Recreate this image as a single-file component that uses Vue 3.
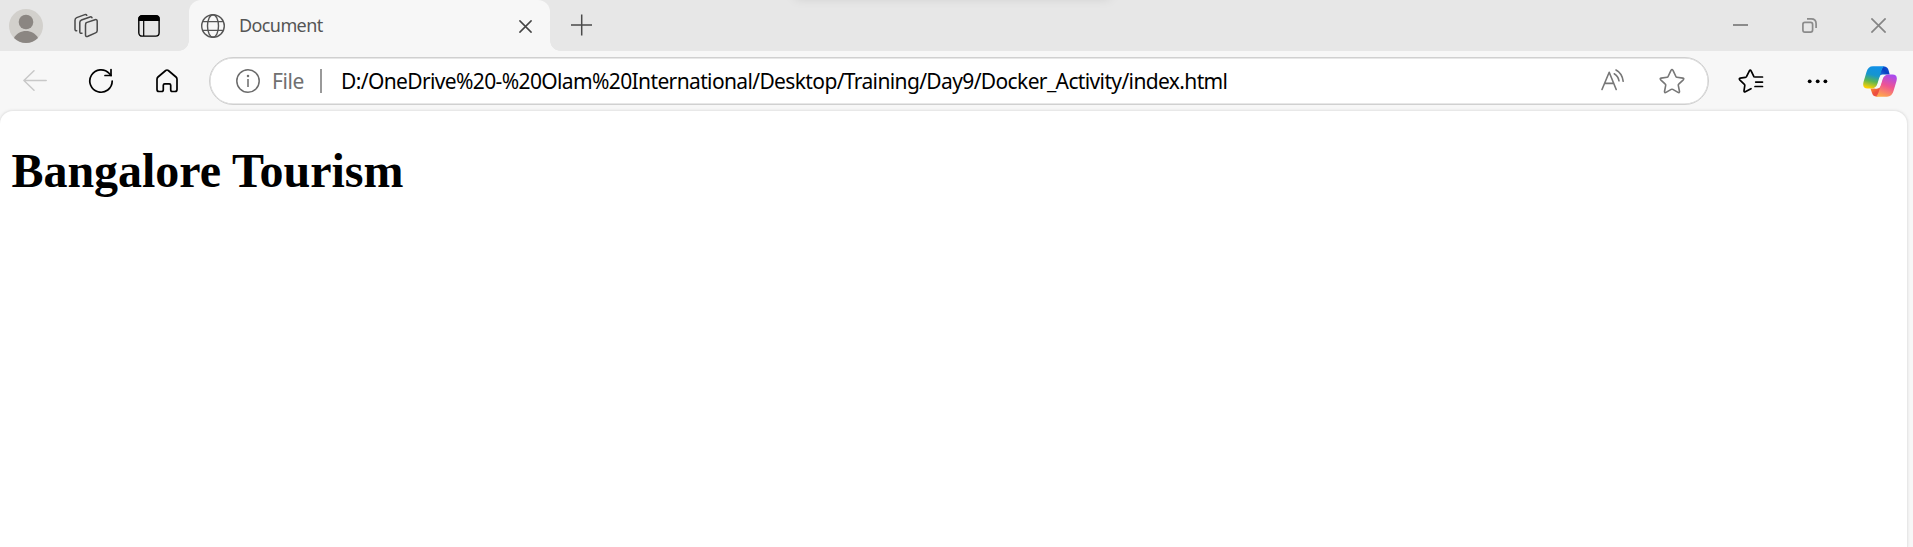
<script setup>
const tabTitle = 'Document'
const scheme = 'File'
const address = 'D:/OneDrive%20-%20Olam%20International/Desktop/Training/Day9/Docker_Activity/index.html'
const heading = 'Bangalore Tourism'
</script>

<template>
  <div class="browser">
    <header class="strip">
      <div class="overhang"></div>
      <svg class="avatar" width="34" height="34" viewBox="0 0 34 34">
        <circle cx="17" cy="17" r="17" fill="#d2d0cc" />
        <circle cx="17" cy="13" r="7.3" fill="#8b8682" />
        <path d="M5 29C7.500 24.300 12 22 17 22s9.500 2.300 12 7A17 17 0 0 1 5 29Z" fill="#8b8682" />
      </svg>
      <svg class="workspaces" width="26" height="26" viewBox="0 0 26 26" fill="none" stroke="#4a4a4a" stroke-width="1.5" stroke-linejoin="round" stroke-linecap="round">
        <path d="M13.300 9.600 22 6.700q2.200-.6 2.200 1.600v9.200q0 1.800-1.600 2.400l-7.700 3.400q-2.400.8-2.400-1.400v-9.500q0-2 .8-2.800Z" />
        <path d="M19 4.800q-.4-1.300-2-.8L8.500 7Q6.800 7.600 6.800 9.600V19q0 1.600 2.200 1.200" />
        <path d="M13.800 2.300q-.6-1.200-2-.7L3.700 4.600Q2 5.300 2 7.200v9q0 1.600 1.700 1.500" />
      </svg>
      <svg class="tabmenu" width="22" height="22" viewBox="0 0 22 22">
        <rect x=".8" y=".8" width="20.300" height="20.300" rx="3.300" fill="none" stroke="#000" stroke-width="1.400" />
        <path d="M.3 6V4Q.3.300 4 .3h14q3.700 0 3.700 3.700v2Z" />
        <path d="M5.700 5v16" stroke="#000" stroke-width="1.200" />
      </svg>
      <div class="tab">
        <svg class="globe" width="24" height="24" viewBox="0 0 24 24" fill="none" stroke="#555" stroke-width="1.400">
          <circle cx="12" cy="12" r="11.300" />
          <ellipse cx="12" cy="12" rx="5.500" ry="11.300" />
          <path d="M1.600 7.600h20.800M1.600 16.400h20.800" />
        </svg>
        <span class="title">{{ tabTitle }}</span>
        <svg class="tabclose" width="13" height="13" viewBox="0 0 13 13" stroke="#444" stroke-width="1.500" stroke-linecap="round">
          <path d="m.9.9 11.200 11.200M12.100.9.900 12.100" />
        </svg>
      </div>
      <svg class="plus" width="22" height="22" viewBox="0 0 22 22" stroke="#4a4a4a" stroke-width="1.500">
        <path d="M0 11h21M10.700.500v21" />
      </svg>
      <div class="controls">
        <svg width="15" height="15" viewBox="0 0 15 15"><path d="M0 7h15" stroke="#8b8b8b" stroke-width="2" /></svg>
        <svg width="15" height="15" viewBox="0 0 15 15" fill="none" stroke="#8b8b8b" stroke-width="1.700">
          <rect x=".9" y="4.400" width="9.700" height="9.700" rx="2" />
          <path d="M5 .9h4.200q4.900 0 4.900 4.900V10" />
        </svg>
        <svg width="15" height="15" viewBox="0 0 15 15" stroke="#858585" stroke-width="1.700"><path d="m.4.4 14.200 14.200M14.600.4.400 14.600" /></svg>
      </div>
    </header>

    <nav class="toolbar">
      <svg class="back" width="24" height="22" viewBox="0 0 24 22" fill="none" stroke="#c8c8c8" stroke-width="1.500" stroke-linecap="round" stroke-linejoin="round">
        <path d="M23.200 10.500H.9M11 .800.900 10.500 11 20.300" />
      </svg>
      <svg class="reload" width="26" height="26" viewBox="0 0 26 26" fill="none" stroke="#000" stroke-width="1.700" stroke-linecap="round" stroke-linejoin="round">
        <path d="M24.200 13A11.200 11.200 0 1 1 21.300 5.500L23 7.500" />
        <path d="M23 1.500v6h-6" />
      </svg>
      <svg class="home" width="22" height="24" viewBox="0 0 22 24" fill="none" stroke="#000" stroke-width="1.700" stroke-linejoin="round">
        <path d="M1 10.200q0-1.300 1-2.200l7.700-6.500q1.300-1 2.600 0L20 8q1 .9 1 2.200v10.300q0 2-2 2h-2.500q-1.800 0-1.800-1.800v-4.500q0-1.400-1.400-1.400H8.700q-1.400 0-1.400 1.400v4.500q0 1.800-1.800 1.800H3q-2 0-2-2Z" />
      </svg>
      <div class="address">
        <svg class="info" width="24" height="24" viewBox="0 0 24 24" fill="none" stroke="#6b6b6b" stroke-width="1.500">
          <circle cx="12" cy="12" r="11.200" />
          <path d="M12 10v8" />
          <circle cx="12" cy="7" r=".5" />
        </svg>
        <span class="scheme">{{ scheme }}</span>
        <i class="divider"></i>
        <span class="url">{{ address }}</span>
        <svg class="read" width="24" height="24" viewBox="0 0 24 24" fill="none" stroke="#777" stroke-width="1.600" stroke-linecap="round" stroke-linejoin="round">
          <path d="M1 20.500 8.200 3.300l7 17.200M3.600 14.400h9.200" />
          <path d="M13.200 4.800q4 2.300 4.800 7M15 1q6.200 3.300 7.200 11.300" />
        </svg>
        <svg class="star" width="26" height="26" viewBox="0 0 26 26" fill="none" stroke="#777" stroke-width="1.600" stroke-linejoin="round">
          <path d="M12 2.300q1-1.600 2 0l2.900 6.200q.3.700 1 .8l6 .8q1.600.4.400 1.700l-4.600 4.400q-.6.500-.4 1.200l1.200 6.100q0 1.600-1.500.9l-5.200-3q-.8-.4-1.600 0l-5.200 3q-1.500.7-1.500-.9l1.200-6.100q.2-.7-.4-1.200l-4.600-4.400q-1.200-1.300.4-1.700l6-.8q.7-.1 1-.8Z" />
        </svg>
      </div>
      <svg class="favorites" width="26" height="26" viewBox="0 0 26 26" fill="none" stroke="#000" stroke-width="1.700" stroke-linecap="round" stroke-linejoin="round">
        <path d="M17 9h7.500M17.700 14.100h6.800M17 18.500h7.500" />
        <path d="m15.900 8.700-2.800-5.900q-.8-1.500-1.700 0L8.500 8.600q-.4.700-1.100.8l-5.200.8q-1.500.3-.5 1.600l4.700 4.500q.5.500.4 1.200l-.8 5.300q-.1 1.500 1.300.9l5.700-3" />
      </svg>
      <svg class="dots" width="22" height="6" viewBox="0 0 22 6"><circle cx="2.700" cy="3.300" r="1.900" /><circle cx="10.700" cy="3.300" r="1.900" /><circle cx="18.400" cy="3.300" r="1.900" /></svg>
      <svg class="copilot" width="34" height="31" viewBox="0 0 34 31">
        <defs>
          <linearGradient id="cool" x1=".6" y1="0" x2=".35" y2="1"><stop offset="0" stop-color="#1090e8" /><stop offset=".4" stop-color="#1695cf" /><stop offset=".68" stop-color="#59b553" /><stop offset="1" stop-color="#ffd000" /></linearGradient>
          <linearGradient id="warm" x1=".7" y1="0" x2=".35" y2="1"><stop offset="0" stop-color="#a84af0" /><stop offset=".5" stop-color="#ef5492" /><stop offset="1" stop-color="#ffa64c" /></linearGradient>
          <linearGradient id="navy" x1="0" y1="1" x2="1" y2="0"><stop offset="0" stop-color="#258be5" /><stop offset=".6" stop-color="#0a40c2" /><stop offset="1" stop-color="#1458d9" /></linearGradient>
          <linearGradient id="ember" x1="0" y1="0" x2=".8" y2="1"><stop offset="0" stop-color="#ffa52c" /><stop offset=".6" stop-color="#ee503e" /><stop offset="1" stop-color="#e84b4e" /></linearGradient>
        </defs>
        <path d="M15 10 20 .500h1q3.500 0 4.500 3.500l1.200 4.500h-7q-2.700 0-3.700 3Z" fill="url(#navy)" />
        <path d="M19 20.500 14.500 30.500h-1q-3.500 0-4.500-3.500l-1.500-4.500h6.700q2.700 0 3.800-3Z" fill="url(#ember)" />
        <path d="M10 .300h12q-2.500.7-3.700 4.700l-3.800 12.500q-1.500 5-6.500 5H4.500q-5.500 0-4-6.500L3.500 6Q5 .300 10 .300Z" fill="url(#cool)" />
        <path d="M24 30.700H12q2.500-.7 3.700-4.700l3.800-12.500q1.500-5 6.500-5h3.500q5.500 0 4 6.500L30.500 25q-1.500 5.700-6.500 5.700Z" fill="url(#warm)" />
        <path d="M20 9h2.200q-2.200 1.300-3 4.100l-1.600 5.400q-1 3.600-4 3.900H11.500q2.500-.9 3.500-4.300l1.400-4.900q.9-3.400 3.600-4.200Z" fill="#f8f8f8" />
      </svg>
    </nav>

    <main class="page">
      <h1>{{ heading }}</h1>
    </main>
  </div>
</template>

<style>
html,
body {
  overflow: hidden;
}
</style>

<style scoped>
.browser {
  display: flex;
  flex-direction: column;
  width: 1913px;
  height: 547px;
  overflow: hidden;
  background: #f7f7f7;
  font-family: "Noto Sans", "Open Sans", sans-serif;
}
svg {
  display: block;
  flex: none;
}
.strip {
  position: relative;
  display: flex;
  align-items: center;
  flex: none;
  box-sizing: border-box;
  height: 51px;
  padding: 1px 27px 0 9px;
  background: #e7e7e7;
}
.overhang {
  position: absolute;
  left: 795px;
  top: -16px;
  width: 315px;
  height: 12px;
  box-shadow: 0 2px 12px rgba(0, 0, 0, 0.12);
}
.workspaces {
  margin-left: 30px;
}
.tabmenu {
  margin-left: 39px;
}
.tab {
  position: relative;
  display: flex;
  align-items: center;
  box-sizing: border-box;
  width: 361px;
  height: 52px;
  margin: -1px 0 0 29px;
  padding: 1px 18px 0 12px;
  border-radius: 12px 12px 0 0;
  background: #f7f7f7;
}
.tab::before,
.tab::after {
  content: "";
  position: absolute;
  bottom: 1px;
  width: 10px;
  height: 10px;
}
.tab::before {
  right: 100%;
  background: radial-gradient(circle at 0 0, transparent 9.5px, #f7f7f7 10px);
}
.tab::after {
  left: 100%;
  background: radial-gradient(circle at 100% 0, transparent 9.5px, #f7f7f7 10px);
}
.title {
  margin-left: 14px;
  color: #555;
  font-size: 18px;
  line-height: 24px;
  letter-spacing: -0.6px;
  white-space: nowrap;
  transform: translateY(-1px);
}
.tabclose {
  margin-left: auto;
}
.plus {
  margin: -3px 0 0 21px;
}
.controls {
  display: flex;
  gap: 54px;
  margin: -1px 0 0 auto;
}
.toolbar {
  display: flex;
  align-items: center;
  flex: none;
  height: 59px;
  padding: 1px 16px 0 23px;
  box-sizing: border-box;
}
.reload {
  margin-left: 41px;
}
.home {
  margin-left: 42px;
}
.address {
  display: flex;
  align-items: center;
  box-sizing: border-box;
  width: 1500px;
  height: 48px;
  margin-left: 31px;
  padding: 0 23px 0 26px;
  border: 1px solid #d0d0d0;
  box-shadow: inset 0 0 0 0.5px #d0d0d0;
  border-radius: 24px;
  background: #fff;
  font-size: 21px;
  line-height: 28px;
  white-space: nowrap;
}
.scheme {
  width: 47px;
  margin-left: 12px;
  color: #707070;
  letter-spacing: -0.4px;
}
.divider {
  width: 2px;
  height: 24px;
  margin-left: 1px;
  background: #999;
}
.url {
  margin-left: 19px;
  color: #000;
  letter-spacing: -0.63px;
}
.read {
  margin-left: auto;
}
.star {
  margin-left: 34px;
}
.favorites {
  margin-left: 29px;
}
.dots {
  margin-left: 43px;
}
.copilot {
  margin-left: auto;
}
.page {
  flex: 1;
  box-sizing: border-box;
  width: 1909px;
  margin-left: -1px;
  padding: 32px 0 0 12px;
  border: 1px solid #e8e8e8;
  border-bottom: 0;
  border-radius: 14px 14px 0 0;
  background: #fff;
  box-shadow: 0 0 3px rgba(0, 0, 0, 0.08);
}
h1 {
  margin: 0 0 0 -0.5px;
  color: #000;
  font: bold 48px/56px "Liberation Serif", serif;
  letter-spacing: -0.04px;
}
</style>
